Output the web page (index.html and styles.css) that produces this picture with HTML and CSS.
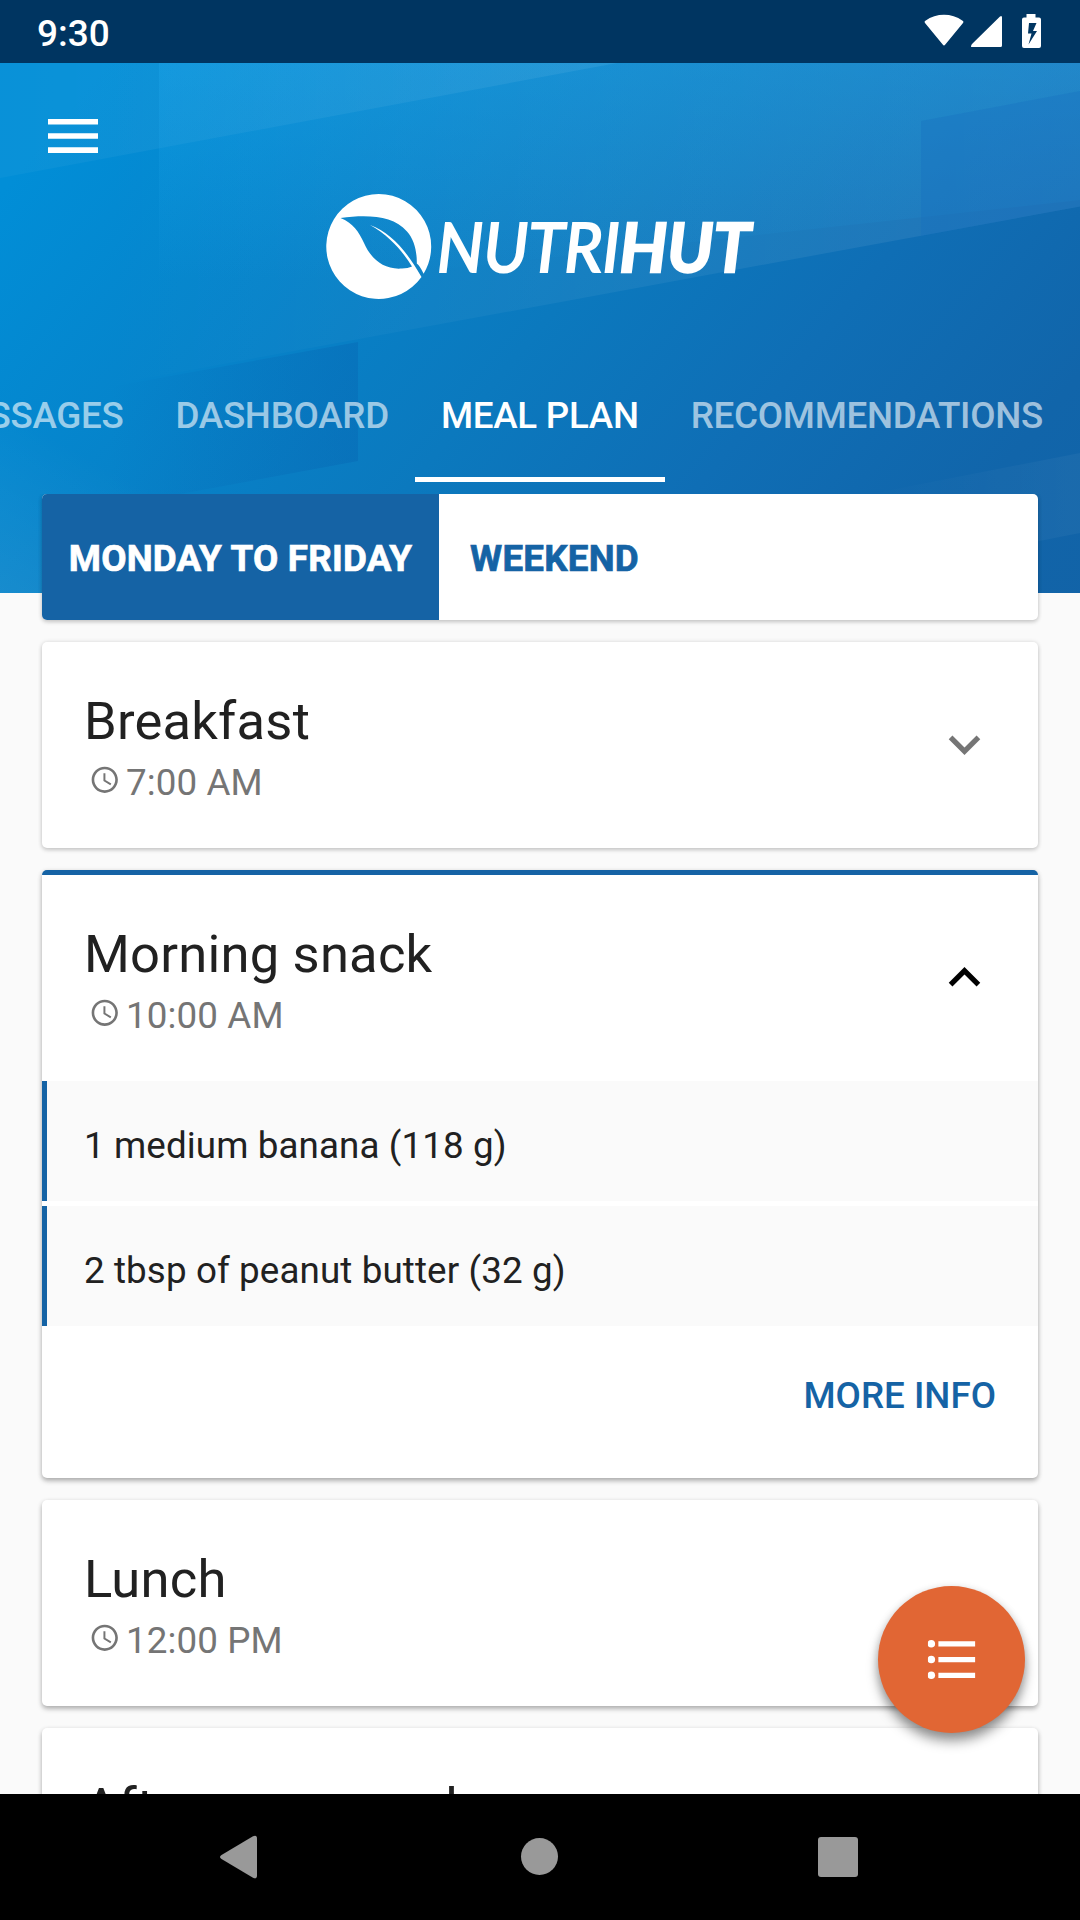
FILE: index.html
```html
<!DOCTYPE html>
<html lang="en">
<head>
<meta charset="utf-8">
<title>Nutrihut – Meal plan</title>
<link rel="stylesheet" href="styles.css">
</head>
<body>
<div class="screen">
  <div class="status-bar">
    <span class="clock">9:30</span>
    <svg class="status-icons" width="118" height="36" viewBox="0 0 118 36" fill="#fff">
      <path d="M1.2 9.2C0.3 8.4 0.4 7.4 1.4 6.7C12.5-1.2 27.500-1.2 38.600 6.700C39.600 7.400 39.700 8.400 38.800 9.200L21.300 30.500C20.400 31.700 19.600 31.700 18.700 30.500Z"/>
      <path d="M47 31.500V33H76.500Q78 33 78 31.500V3.500Q78 1 76 2.500L48 30Q47 31 47 33Z"/>
      <path fill-rule="evenodd" d="M102.500 0H111.500V3.500H115Q117 3.500 117 5.500V32Q117 34 115 34H100Q98 34 98 32V5.500Q98 3.500 100 3.500H102.500ZM105 9L104 19.500H107.500L104.500 30.500L113 17H109L112.500 9Z"/>
    </svg>
  </div>

  <header class="header">
    <svg class="header-art" width="1080" height="530" viewBox="0 63 1080 530" preserveAspectRatio="none">
      <defs>
        <linearGradient id="base" gradientUnits="userSpaceOnUse" x1="60" y1="120" x2="920" y2="830">
          <stop offset="0" stop-color="#018ed7"/>
          <stop offset=".45" stop-color="#0b79be"/>
          <stop offset=".65" stop-color="#0f6eb5"/>
          <stop offset=".85" stop-color="#1165aa"/>
          <stop offset="1" stop-color="#1263a7"/>
        </linearGradient>
        <linearGradient id="band" gradientUnits="userSpaceOnUse" x1="100" y1="0" x2="1080" y2="0">
          <stop offset="0" stop-color="#fff" stop-opacity="0"/>
          <stop offset=".5" stop-color="#fff" stop-opacity=".05"/>
          <stop offset="1" stop-color="#fff" stop-opacity=".08"/>
        </linearGradient>
        <linearGradient id="top" gradientUnits="userSpaceOnUse" x1="0" y1="0" x2="617" y2="0">
          <stop offset="0" stop-color="#fff" stop-opacity=".03"/>
          <stop offset="1" stop-color="#fff" stop-opacity=".09"/>
        </linearGradient>
        <linearGradient id="corner" gradientUnits="userSpaceOnUse" x1="159" y1="63" x2="159" y2="280">
          <stop offset="0" stop-color="#20a8ec" stop-opacity=".32"/>
          <stop offset="1" stop-color="#20a8ec" stop-opacity="0"/>
        </linearGradient>
        <linearGradient id="panel" gradientUnits="userSpaceOnUse" x1="110" y1="0" x2="358" y2="0">
          <stop offset="0" stop-color="#055fae" stop-opacity="0"/>
          <stop offset="1" stop-color="#055fae" stop-opacity=".32"/>
        </linearGradient>
        <linearGradient id="bottomLeft" gradientUnits="userSpaceOnUse" x1="0" y1="593" x2="80" y2="450">
          <stop offset="0" stop-color="#fff" stop-opacity=".07"/>
          <stop offset="1" stop-color="#fff" stop-opacity="0"/>
        </linearGradient>
        <linearGradient id="lowBand" gradientUnits="userSpaceOnUse" x1="860" y1="0" x2="1080" y2="0">
          <stop offset="0" stop-color="#fff" stop-opacity="0"/>
          <stop offset="1" stop-color="#fff" stop-opacity=".04"/>
        </linearGradient>
      </defs>
      <rect y="63" width="1080" height="530" fill="url(#base)"/>
      <path d="M0 63H1080V206.500L0 405Z" fill="url(#band)"/>
      <path d="M0 63H617L0 178Z" fill="url(#top)"/>
      <path d="M159 63H1080V200L159 300Z" fill="url(#corner)"/>
      <path d="M921 121L1080 91V206.500L921 236Z" fill="#1870c0" fill-opacity=".35"/>
      <path d="M110 387L358 342V461L110 507Z" fill="url(#panel)"/>
      <path d="M0 400H400V593H0Z" fill="url(#bottomLeft)"/>
      <path d="M860 496L1080 453V533L860 576Z" fill="url(#lowBand)"/>
    </svg>

    <svg class="menu-icon" width="50" height="34" viewBox="0 0 50 34" fill="#fff">
      <path d="M0 0H50V5.500H0ZM0 14.200H50V19.700H0ZM0 28.200H50V34H0Z"/>
    </svg>

    <svg class="logo" width="440" height="110" viewBox="320 190 440 110" role="img" aria-label="Nutrihut">
      <path fill="#fff" fill-rule="evenodd" d="M378.700 194A52.500 52.500 0 0 1 423.600 273.700Q420 266 416.800 263.500C417 252 414.500 240 407 231.500C393 215.500 368 214.500 340.500 218C353 223 359 232 364 243C371 259 384 270 402 268.500Q408 268.300 412 266.500C403 252 390 236 370 225C391 233 406 250 421.500 277A52.500 52.500 0 1 1 378.700 194Z"/>
      <text class="logo-light" x="437" y="272" textLength="183" lengthAdjust="spacingAndGlyphs">NUTRI</text>
      <text class="logo-heavy" x="619.500" y="272" textLength="131" lengthAdjust="spacingAndGlyphs">HUT</text>
    </svg>

    <nav class="tabs">
      <a class="tab">MESSAGES</a>
      <a class="tab">DASHBOARD</a>
      <a class="tab tab-active">MEAL PLAN</a>
      <a class="tab">RECOMMENDATIONS</a>
    </nav>
  </header>

  <main class="content">
    <div class="card day-switch">
      <button class="day day-active">MONDAY TO FRIDAY</button>
      <button class="day">WEEKEND</button>
    </div>

    <section class="card">
      <div class="meal-head">
        <div>
          <h2 class="meal-title">Breakfast</h2>
          <p class="meal-time"><svg class="time-icon" viewBox="0 0 24 24"><use href="#clock"/></svg>7:00 AM</p>
        </div>
        <svg class="chevron" viewBox="0 0 24 24"><path fill="#757575" d="M16.590 8.590L12 13.170 7.410 8.590 6 10l6 6 6-6z"/></svg>
      </div>
    </section>

    <section class="card card-open">
      <div class="meal-head">
        <div>
          <h2 class="meal-title">Morning snack</h2>
          <p class="meal-time"><svg class="time-icon" viewBox="0 0 24 24"><use href="#clock"/></svg>10:00 AM</p>
        </div>
        <svg class="chevron" viewBox="0 0 24 24"><path d="M7.410 15.410L12 10.830l4.590 4.580L18 14l-6-6-6 6z"/></svg>
      </div>
      <ul class="foods">
        <li class="food">1 medium banana (118 g)</li>
        <li class="food">2 tbsp of peanut butter (32 g)</li>
      </ul>
      <div class="actions"><a class="more">MORE INFO</a></div>
    </section>

    <section class="card card-low">
      <div class="meal-head">
        <div>
          <h2 class="meal-title">Lunch</h2>
          <p class="meal-time"><svg class="time-icon" viewBox="0 0 24 24"><use href="#clock"/></svg>12:00 PM</p>
        </div>
      </div>
    </section>

    <section class="card card-low">
      <div class="meal-head">
        <h2 class="meal-title">Afternoon snack</h2>
      </div>
    </section>
  </main>

  <button class="fab" aria-label="Shopping list">
    <svg width="63" height="63" viewBox="0 0 24 24" fill="#fff">
      <defs><clipPath id="dots"><rect x="3" width="20" height="24"/></clipPath></defs>
      <g clip-path="url(#dots)">
        <circle cx="4.300" cy="6" r="1.450"/><circle cx="4.300" cy="12" r="1.450"/><circle cx="4.300" cy="18" r="1.450"/>
        <path d="M7 5h14v2H7zM7 11h14v2H7zM7 17h14v2H7z"/>
      </g>
    </svg>
  </button>

  <div class="nav-bar">
    <svg width="1080" height="126" viewBox="0 0 1080 126" fill="#999">
      <path d="M221.500 61L253 42.200Q257 40.500 257 44.500V81.500Q257 85.500 253 83.800L221.500 65Q218.500 63 221.500 61Z"/>
      <circle cx="539.500" cy="62.500" r="18.500"/>
      <rect x="818" y="43" width="40" height="40" rx="3"/>
    </svg>
  </div>
</div>

<svg width="0" height="0" class="symbols">
  <symbol id="clock" viewBox="0 0 24 24">
    <path fill="#757575" d="M11.990 2C6.470 2 2 6.480 2 12s4.470 10 9.990 10C17.520 22 22 17.520 22 12S17.520 2 11.990 2zM12 20c-4.420 0-8-3.580-8-8s3.580-8 8-8 8 3.580 8 8-3.580 8-8 8zM12.500 7H11v6l5.250 3.150.75-1.230-4.500-2.670z"/>
  </symbol>
</svg>
</body>
</html>
```
FILE: styles.css
```css
* { box-sizing: border-box; margin: 0; padding: 0; }

body {
  font-family: Roboto, "Liberation Sans", sans-serif;
  font-size: 36.75px;
  letter-spacing: .11px;
  color: #212121;
  background: #fafafa;
}

.symbols { position: absolute; }

.screen {
  position: relative;
  display: flex;
  flex-direction: column;
  width: 1080px;
  height: 1920px;
  overflow: hidden;
  background: #fafafa;
}

.status-bar {
  flex: none;
  display: flex;
  justify-content: space-between;
  align-items: flex-start;
  height: 63px;
  padding: 14px 38px 0 37px;
  background: #003561;
  color: #fff;
}

.clock { font-weight: 500; font-size: 37px; line-height: 40px; letter-spacing: 0; }

.header {
  flex: none;
  position: relative;
  display: flex;
  flex-direction: column;
  height: 530px;
}

.header-art { position: absolute; inset: 0; }

.menu-icon { position: relative; margin: 56px 0 0 48px; }

.logo { position: relative; margin: 37px 0 0 320px; }

.logo-light, .logo-heavy {
  font-family: Lato, sans-serif;
  font-style: italic;
  font-size: 67px;
  letter-spacing: 0;
  fill: #fff;
  stroke: #fff;
}
.logo-light { font-weight: 400; stroke-width: 2.1px; }
.logo-heavy { font-weight: 700; stroke-width: 2.3px; }

.tabs {
  position: relative;
  display: flex;
  justify-content: flex-end;
  width: 1069px;
  height: 126px;
  margin-top: 56px;
}

.tab {
  flex: none;
  height: 126px;
  padding: 0 26px;
  line-height: 120px;
  letter-spacing: -.28px;
  font-weight: 500;
  color: rgba(255, 255, 255, .6);
  white-space: nowrap;
}

.tab-active { color: #fff; border-bottom: 5px solid #fff; }

.content {
  position: relative;
  flex: none;
  display: flex;
  flex-direction: column;
  gap: 22px;
  height: 1300px;
  margin-top: -99px;
  padding: 0 42px;
  overflow: hidden;
}

.card {
  flex: none;
  border-radius: 5px;
  background: #fff;
  box-shadow: 0 2px 4px rgba(0, 0, 0, .18), 0 0 5px rgba(0, 0, 0, .1);
}

.card-low { box-shadow: 0 3px 5px rgba(0, 0, 0, .25), 0 1px 5px rgba(0, 0, 0, .1); }

.day-switch { display: flex; height: 126px; overflow: hidden; }

.day {
  border: 0;
  padding: 2px 27px 0 31px;
  background: transparent;
  color: #1563a5;
  font: 700 36.75px Roboto, sans-serif;
  letter-spacing: .22px;
  -webkit-text-stroke: .7px currentColor;
}

.day-active { width: 397px; padding: 2px 0 0; background: #1563a5; color: #fff; }

.meal-head {
  display: flex;
  justify-content: space-between;
  align-items: flex-start;
  height: 206px;
  padding: 48px 42px 0;
}

.meal-title { font-size: 52.500px; font-weight: 400; line-height: 62px; letter-spacing: .22px; }

.meal-time {
  display: flex;
  align-items: center;
  height: 60px;
  color: #757575;
}

.time-icon { flex: none; width: 31.500px; height: 31.500px; margin: -4px 5.500px 0 5px; }

.chevron { flex: none; width: 63px; height: 63px; margin-top: 23px; }

.card-open {
  height: 608px;
  border-top: 5px solid #1563a5;
  box-shadow: 0 3px 5px rgba(0, 0, 0, .25), 0 1px 5px rgba(0, 0, 0, .12);
}

.foods { display: flex; flex-direction: column; gap: 5px; list-style: none; }

.food {
  height: 120px;
  padding-left: 37px;
  border-left: 5px solid #1563a5;
  background: #fafafa;
  line-height: 130px;
}

.actions { display: flex; justify-content: flex-end; padding: 42px 42px 0; }

.more { line-height: 56px; letter-spacing: 0; font-weight: 500; color: #1563a5; }

.fab {
  position: absolute;
  left: 878px;
  top: 1586px;
  display: flex;
  align-items: center;
  justify-content: center;
  width: 147px;
  height: 147px;
  padding: 0 1px 1px 0;
  border: 0;
  border-radius: 50%;
  background: #e16634;
  box-shadow: 0 9px 12px rgba(0, 0, 0, .36), 0 2px 9px rgba(0, 0, 0, .16);
}

.nav-bar {
  position: relative;
  flex: none;
  height: 126px;
  background: #000;
}
.nav-bar svg { display: block; }
```
